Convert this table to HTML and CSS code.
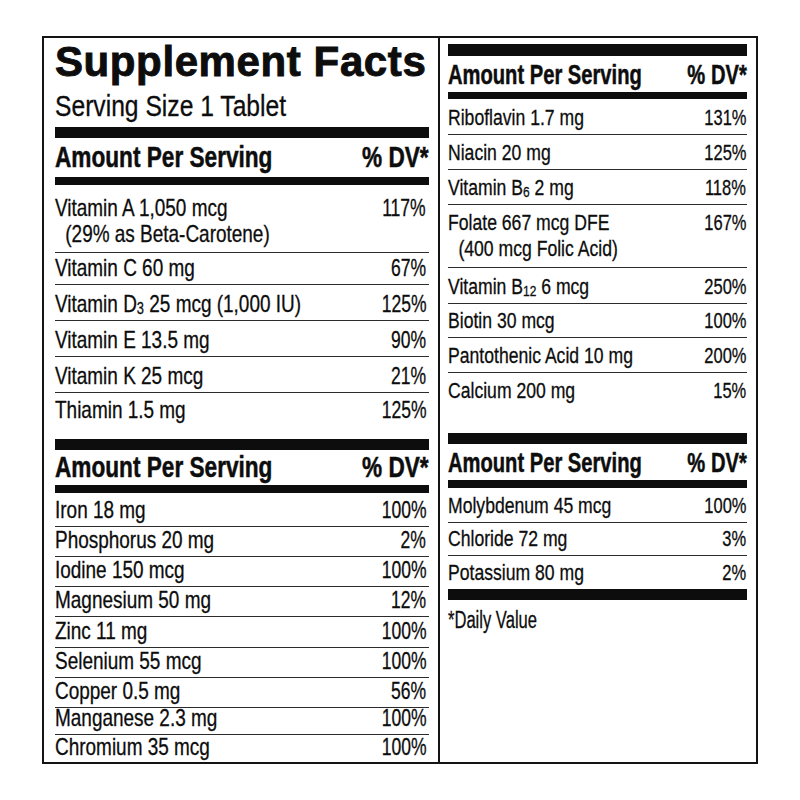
FILE: index.html
```html
<!DOCTYPE html>
<html lang="en">
<head>
<meta charset="utf-8">
<title>Supplement Facts</title>
<link rel="stylesheet" href="styles.css">
</head>
<body>
<div class="label">
  <div class="col col-left">
    <h1 class="title">Supplement Facts</h1>
    <div class="serving"><span class="serving-text">Serving Size 1 Tablet</span></div>
    <div class="bar bar-thick"></div>
    <div class="head head-first"><span class="head-l">Amount Per Serving</span><span class="head-r">% DV*</span></div>
    <div class="bar bar-thin"></div>
    <div class="rows rows-l1">
      <div class="row row-two"><div class="name">Vitamin A 1,050 mcg<span class="sub">(29% as Beta-Carotene)</span></div><div class="pct">117%</div></div>
      <div class="row"><div class="name">Vitamin C 60 mg</div><div class="pct">67%</div></div>
      <div class="row"><div class="name">Vitamin D<span class="idx">3</span> 25 mcg (1,000 IU)</div><div class="pct">125%</div></div>
      <div class="row"><div class="name">Vitamin E 13.5 mg</div><div class="pct">90%</div></div>
      <div class="row"><div class="name">Vitamin K 25 mcg</div><div class="pct">21%</div></div>
      <div class="row"><div class="name">Thiamin 1.5 mg</div><div class="pct">125%</div></div>
    </div>
    <div class="bar bar-thick bar-gap-l"></div>
    <div class="head"><span class="head-l">Amount Per Serving</span><span class="head-r">% DV*</span></div>
    <div class="bar bar-thin"></div>
    <div class="rows rows-l2">
      <div class="row"><div class="name">Iron 18 mg</div><div class="pct">100%</div></div>
      <div class="row"><div class="name">Phosphorus 20 mg</div><div class="pct">2%</div></div>
      <div class="row"><div class="name">Iodine 150 mcg</div><div class="pct">100%</div></div>
      <div class="row"><div class="name">Magnesium 50 mg</div><div class="pct">12%</div></div>
      <div class="row"><div class="name">Zinc 11 mg</div><div class="pct">100%</div></div>
      <div class="row"><div class="name">Selenium 55 mcg</div><div class="pct">100%</div></div>
      <div class="row"><div class="name">Copper 0.5 mg</div><div class="pct">56%</div></div>
      <div class="row"><div class="name">Manganese 2.3 mg</div><div class="pct">100%</div></div>
      <div class="row"><div class="name">Chromium 35 mcg</div><div class="pct">100%</div></div>
    </div>
  </div>
  <div class="col col-right">
    <div class="bar bar-top"></div>
    <div class="head"><span class="head-l">Amount Per Serving</span><span class="head-r">% DV*</span></div>
    <div class="bar bar-thin bar-thin-r"></div>
    <div class="rows rows-r1">
      <div class="row"><div class="name">Riboflavin 1.7 mg</div><div class="pct">131%</div></div>
      <div class="row"><div class="name">Niacin 20 mg</div><div class="pct">125%</div></div>
      <div class="row"><div class="name">Vitamin B<span class="idx">6</span> 2 mg</div><div class="pct">118%</div></div>
      <div class="row row-two"><div class="name">Folate 667 mcg DFE<span class="sub">(400 mcg Folic Acid)</span></div><div class="pct">167%</div></div>
      <div class="row"><div class="name">Vitamin B<span class="idx">12</span> 6 mcg</div><div class="pct">250%</div></div>
      <div class="row"><div class="name">Biotin 30 mcg</div><div class="pct">100%</div></div>
      <div class="row"><div class="name">Pantothenic Acid 10 mg</div><div class="pct">200%</div></div>
      <div class="row"><div class="name">Calcium 200 mg</div><div class="pct">15%</div></div>
    </div>
    <div class="bar bar-thick bar-gap-r"></div>
    <div class="head"><span class="head-l">Amount Per Serving</span><span class="head-r">% DV*</span></div>
    <div class="bar bar-thin"></div>
    <div class="rows rows-r2">
      <div class="row"><div class="name">Molybdenum 45 mcg</div><div class="pct">100%</div></div>
      <div class="row"><div class="name">Chloride 72 mg</div><div class="pct">3%</div></div>
      <div class="row"><div class="name">Potassium 80 mg</div><div class="pct">2%</div></div>
    </div>
    <div class="bar bar-thick"></div>
    <div class="note"><span class="note-text">*Daily Value</span></div>
  </div>
</div>
</body>
</html>
```

FILE: styles.css
```css
html, body {
  margin: 0;
  padding: 0;
  background: #ffffff;
}

body {
  padding: 36px 0 0 42px;
  color: #0d0d0d;
  font-family: "Liberation Sans", Arial, sans-serif;
}

.label {
  display: grid;
  grid-template-columns: 396px 314px;
  width: 712px;
  height: 724px;
  border: 2px solid #141414;
}

.col {
  display: flex;
  flex-direction: column;
  min-width: 0;
}

.col-left {
  border-right: 2px solid #141414;
  padding: 0 9px 0 11px;
}

.col-right {
  padding: 6px 7px 0 8px;
}

.title {
  margin: 0;
  padding-top: 3px;
  font-weight: 700;
  font-size: 42px;
  line-height: 42px;
  letter-spacing: 0.6px;
  white-space: nowrap;
  -webkit-text-stroke: 0.9px currentColor;
}

.serving {
  height: 44px;
  box-sizing: border-box;
  padding-top: 8px;
  font-size: 29px;
  line-height: 30px;
  white-space: nowrap;
  -webkit-text-stroke: 0.3px currentColor;
}

.serving-text {
  display: inline-block;
  transform: scaleX(0.85);
  transform-origin: 0 0;
}

.bar {
  flex: none;
  background: #0d0d0d;
}

.bar-thick {
  height: 11px;
}

.bar-top {
  height: 12px;
}

.bar-thin {
  height: 8px;
}

.bar-thin-r {
  height: 7px;
}

.bar-gap-l {
  margin-top: 13px;
}

.bar-gap-r {
  margin-top: 26px;
}

.head {
  flex: none;
  display: grid;
  grid-template-columns: minmax(0, 1fr) auto;
  align-content: end;
  height: 35px;
  box-sizing: border-box;
  padding-bottom: 3px;
  font-weight: 700;
  font-size: 29px;
  line-height: 29px;
  white-space: nowrap;
  -webkit-text-stroke: 0.5px currentColor;
}

.head-first {
  height: 39px;
  padding-bottom: 5px;
}

.head-l,
.head-r {
  display: block;
  transform: scaleX(0.78);
}

.head-l {
  transform-origin: 0 100%;
}

.head-r {
  transform-origin: 100% 100%;
  padding-right: 1px;
}

.col-right .head {
  height: 36px;
  font-size: 28px;
  line-height: 28px;
}

.col-right .head-l,
.col-right .head-r {
  transform: scaleX(0.72);
}

.rows {
  flex: none;
  display: grid;
}

.rows-l1 {
  grid-template-rows: 68px 32px 36px 36px 36px 33px;
}

.rows-l2 {
  grid-template-rows: 34px 30px 30px 30px 31px 30px 30px 27px 28px;
}

.rows-r1 {
  grid-template-rows: 36px 35px 35px 63px 36px 34px 35px 34px;
}

.rows-r2 {
  grid-template-rows: 35px 33px 33px;
}

.row {
  display: grid;
  grid-template-columns: minmax(0, 1fr) auto;
  align-content: end;
  align-items: start;
  box-sizing: border-box;
  border-bottom: 1px solid #2b2b2b;
  padding-bottom: 3px;
  font-size: 24px;
  line-height: 26px;
  white-space: nowrap;
  -webkit-text-stroke: 0.3px currentColor;
}

.row:last-child {
  border-bottom: none;
}

.row-two {
  padding-bottom: 5px;
}

.name {
  transform: scaleX(0.79);
  transform-origin: 0 0;
}

.pct {
  padding-right: 4px;
  transform: scaleX(0.73);
  transform-origin: 100% 0;
}

.col-right .row {
  font-size: 22px;
}

.col-right .name {
  transform: scaleX(0.8);
}

.col-right .pct {
  padding-right: 1px;
  transform: scaleX(0.75);
}

.sub {
  display: block;
  padding-left: 13px;
}

.idx {
  font-size: 0.68em;
  vertical-align: -0.14em;
  line-height: 0;
}

.note {
  padding-top: 7px;
  font-size: 23px;
  line-height: 26px;
  white-space: nowrap;
  -webkit-text-stroke: 0.3px currentColor;
}

.note-text {
  display: inline-block;
  transform: scaleX(0.72);
  transform-origin: 0 0;
}
```
